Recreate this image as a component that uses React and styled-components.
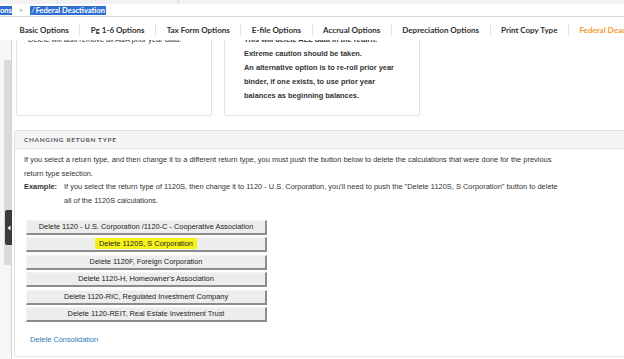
import React from "react";
import styled, { createGlobalStyle } from "styled-components";

const Global = createGlobalStyle`
  html, body { margin: 0; padding: 0; background: #fff; overflow: hidden; }
  body { font-family: "Liberation Sans", Arial, sans-serif; }
`;

const Frame = styled.div`
  position: relative;
  width: 700px;
  height: 359px;
  overflow: hidden;
  background: #fff;
  display: flex;
  flex-direction: column;
`;

const TopStrip = styled.div`
  height: 4px;
  background: #f1f1f1;
  display: flex;
`;

const StripCell = styled.div`
  width: ${(p) => p.$w}px;
  border-right: 1px solid #dcdcdc;
`;

const Breadcrumb = styled.div`
  height: 12px;
  border-bottom: 1px solid #d9d9d9;
  display: flex;
  align-items: center;
  font-family: Lato, "Liberation Sans", sans-serif;
  font-weight: 700;
  font-size: 7.5px;
`;

const Selected = styled.span`
  background: #2f6fd1;
  color: #fff;
  height: 9px;
  line-height: 9px;
  padding: 0 ${(p) => p.$pad || 0}px;
  display: inline-flex;
  align-items: center;
`;

const Chevron = styled.span`
  color: #8a8a8a;
  font-weight: 400;
  font-size: 8px;
  margin: 0 7px 0 7px;
`;

const Caret = styled.span`
  font-style: italic;
  font-weight: 400;
  margin-right: 1px;
`;

const TabBar = styled.nav`
  height: 23px;
  padding: 2px 0 0 9px;
  box-sizing: border-box;
  display: flex;
  align-items: center;
  white-space: nowrap;
  font-family: Lato, "Liberation Sans", sans-serif;
  font-weight: 700;
  font-size: 8px;
  background: #fff;
`;

const Tab = styled.div`
  padding: 0 10.5px;
  color: ${(p) => (p.$active ? "#f29a2e" : "#2f2f2f")};
  border-right: ${(p) => (p.$active ? "none" : "1px solid #e3e3e3")};
  line-height: 12px;
`;

const Body = styled.div`
  flex: 1;
  display: flex;
  min-height: 0;
`;

const Rail = styled.aside`
  width: 11px;
  border-right: 1px solid #d4d4d4;
  background: #f6f6f6;
  display: flex;
  flex-direction: column;
  align-items: flex-end;
`;

const RailThumb = styled.div`
  margin-top: 20px;
  width: 7px;
  height: 205px;
  background: #dadada;
`;

const Handle = styled.div`
  position: absolute;
  left: 5px;
  top: 210px;
  width: 7px;
  height: 35px;
  background: #3b3b3b;
  border-radius: 2px 0 0 2px;
  display: flex;
  align-items: center;
  justify-content: center;
`;

const Content = styled.main`
  flex: 1;
  padding-left: 2px;
  display: flex;
  flex-direction: column;
`;

const CardsViewport = styled.div`
  height: 76px;
  overflow: hidden;
  display: flex;
  flex-direction: column;
  justify-content: flex-end;
  padding-left: 2px;
`;

const CardRow = styled.div`
  display: flex;
  gap: 12px;
  align-items: stretch;
`;

const Card = styled.div`
  width: 196px;
  box-sizing: border-box;
  border: 1px solid #e3e3e3;
  border-top: none;
  border-radius: 0 0 2px 2px;
  padding: 0 6px 12px ${(p) => p.$indent}px;
  font-size: 7.4px;
  line-height: 14px;
  color: #333;
  font-weight: ${(p) => (p.$strong ? 700 : 400)};
`;

const CardLine = styled.div`
  white-space: nowrap;
`;

const Section = styled.section`
  margin-top: 14px;
  border: 1px solid #e2e2e2;
  border-radius: 2px;
  padding-bottom: 10px;
`;

const SectionHeader = styled.header`
  height: 17px;
  background: #f4f5f7;
  border-bottom: 1px solid #e2e3e6;
  padding-left: 9px;
  display: flex;
  align-items: center;
  font-family: Lato, "Liberation Sans", sans-serif;
  font-weight: 700;
  font-size: 6.4px;
  letter-spacing: 0.7px;
  color: #555;
`;

const SectionBody = styled.div`
  padding: 4px 0 0 9px;
  font-size: 7.45px;
  line-height: 13.5px;
  color: #333;
`;

const Para = styled.p`
  margin: 0;
  width: 540px;
`;

const Example = styled.div`
  display: grid;
  grid-template-columns: 40px 500px;
`;

const Label = styled.span`
  font-weight: 700;
`;

const ButtonStack = styled.div`
  margin: 13px 0 0 2px;
  display: flex;
  flex-direction: column;
  gap: 2.4px;
  width: 241px;
`;

const DeleteButton = styled.button`
  height: 15px;
  box-sizing: border-box;
  padding: 0;
  background: #ededed;
  border: 1px solid #f4f4f4;
  border-right: 2px solid #8c8c8c;
  border-bottom: 2px solid #8c8c8c;
  font-family: "Liberation Sans", Arial, sans-serif;
  font-size: 7.4px;
  color: #222;
  text-align: center;
  line-height: 12px;
  white-space: nowrap;
`;

const Marker = styled.span`
  background: #f7f21a;
  padding: 1px 4px;
`;

const Link = styled.a`
  display: block;
  margin: 12px 0 0 6px;
  font-size: 7.4px;
  line-height: 12px;
  color: #2b78b6;
  text-decoration: none;
`;

const tabs = [
  "Basic Options",
  "Pg 1-6 Options",
  "Tax Form Options",
  "E-file Options",
  "Accrual Options",
  "Depreciation Options",
  "Print Copy Type",
];

const buttons = [
  "Delete 1120 - U.S. Corporation /1120-C - Cooperative Association",
  "Delete 1120S, S Corporation",
  "Delete 1120F, Foreign Corporation",
  "Delete 1120-H, Homeowner's Association",
  "Delete 1120-RIC, Regulated Investment Company",
  "Delete 1120-REIT, Real Estate Investment Trust",
];

export default function App() {
  return (
    <>
      <Global />
      <Frame>
        <TopStrip>
          <StripCell $w={57} />
          <StripCell $w={120} />
        </TopStrip>
        <Breadcrumb>
          <Selected>ons</Selected>
          <Chevron>&gt;</Chevron>
          <Selected $pad={1}>
            <Caret>/</Caret>Federal Deactivation
          </Selected>
        </Breadcrumb>
        <TabBar>
          {tabs.map((t) => (
            <Tab key={t}>{t}</Tab>
          ))}
          <Tab $active>Federal Deactivation</Tab>
        </TabBar>
        <Body>
          <Rail>
            <RailThumb />
          </Rail>
          <Content>
            <CardsViewport>
              <CardRow>
                <Card $indent={11}>
                  <CardLine>Delete will also remove all A&amp;A prior year data.</CardLine>
                </Card>
                <Card $strong $indent={19}>
                  <CardLine>This will delete ALL data in the return.</CardLine>
                  <CardLine>Extreme caution should be taken.</CardLine>
                  <CardLine>An alternative option is to re-roll prior year</CardLine>
                  <CardLine>binder, if one exists, to use prior year</CardLine>
                  <CardLine>balances as beginning balances.</CardLine>
                </Card>
              </CardRow>
            </CardsViewport>
            <Section>
              <SectionHeader>CHANGING RETURN TYPE</SectionHeader>
              <SectionBody>
                <Para>
                  If you select a return type, and then change it to a different return type, you must push the button below to delete the calculations that were done for the previous return type selection.
                </Para>
                <Example>
                  <Label>Example:</Label>
                  <span>
                    If you select the return type of 1120S, then change it to 1120 - U.S. Corporation, you'll need to push the "Delete 1120S, S Corporation" button to delete all of the 1120S calculations.
                  </span>
                </Example>
                <ButtonStack>
                  {buttons.map((b, i) => (
                    <DeleteButton key={b}>{i === 1 ? <Marker>{b}</Marker> : b}</DeleteButton>
                  ))}
                </ButtonStack>
                <Link href="#">Delete Consolidation</Link>
              </SectionBody>
            </Section>
          </Content>
        </Body>
        <Handle>
          <svg width="4" height="6" viewBox="0 0 4 6">
            <path d="M3.5 0.5 L0.5 3 L3.5 5.5 Z" fill="#fff" />
          </svg>
        </Handle>
      </Frame>
    </>
  );
}
